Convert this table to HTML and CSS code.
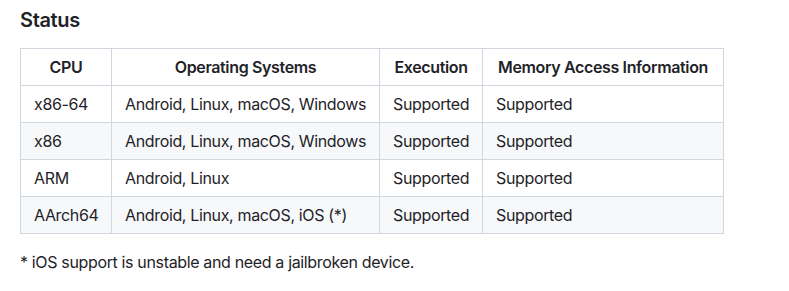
FILE: index.html
```html
<!DOCTYPE html>
<html lang="en">
<head>
  <meta charset="UTF-8" />
  <title>Status</title>
  <link rel="stylesheet" href="styles.css">
</head>
<body>

  <div class="markdown-body">
    <h3>Status</h3>

    <table class="status-table">
      <colgroup>
        <col class="col-cpu">
        <col class="col-os">
        <col class="col-exec">
        <col class="col-mem">
      </colgroup>
      <thead>
        <tr>
          <th>CPU</th>
          <th>Operating Systems</th>
          <th>Execution</th>
          <th>Memory Access Information</th>
        </tr>
      </thead>
      <tbody>
        <tr>
          <td>x86-64</td>
          <td>Android, Linux, macOS, Windows</td>
          <td>Supported</td>
          <td>Supported</td>
        </tr>
        <tr>
          <td>x86</td>
          <td>Android, Linux, macOS, Windows</td>
          <td>Supported</td>
          <td>Supported</td>
        </tr>
        <tr>
          <td>ARM</td>
          <td>Android, Linux</td>
          <td>Supported</td>
          <td>Supported</td>
        </tr>
        <tr>
          <td>AArch64</td>
          <td>Android, Linux, macOS, iOS (*)</td>
          <td>Supported</td>
          <td>Supported</td>
        </tr>
      </tbody>
    </table>

    <p>* iOS support is unstable and need a jailbroken device.</p>
  </div>

</body>
</html>
```

FILE: styles.css
```css
body {
  margin: 0;
  padding: 8px 20px;
  background: #fff;
  color: #1f2328;
  font-family: Inter, "Liberation Sans", sans-serif;
  font-size: 16px;
  line-height: 1.5;
  letter-spacing: -0.35px;
}

h3 {
  margin: 0 0 15px;
  font-size: 20px;
  font-weight: 600;
  line-height: 1.25;
}

.status-table {
  border-collapse: collapse;
  border-spacing: 0;
  table-layout: fixed;
  width: 703px;
}

.col-cpu { width: 91px; }
.col-os { width: 268px; }
.col-exec { width: 103px; }
.col-mem { width: 241px; }

.status-table th,
.status-table td {
  padding: 6px 13px;
  border: 1px solid #d0d7de;
  white-space: nowrap;
}

.status-table th {
  font-weight: 600;
  text-align: center;
}

.status-table td {
  text-align: left;
}

.status-table tbody tr:nth-child(2n) {
  background: #f6f8fa;
}

p {
  margin: 16px 0 0;
}
```
